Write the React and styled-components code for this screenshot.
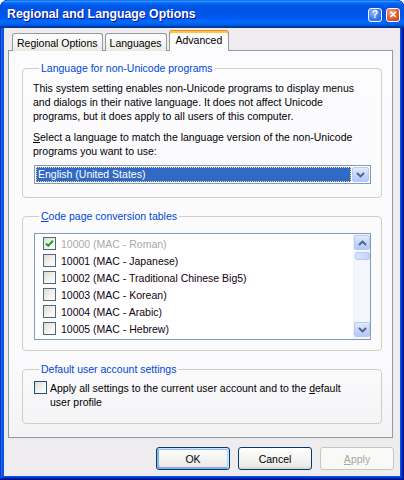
import React from 'react';
import styled, {createGlobalStyle, css} from 'styled-components';

const GlobalStyle = createGlobalStyle`
  html, body {
    margin: 0;
    padding: 0;
    background: #fff;
  }
  body {
    font-family: "Liberation Sans", Arial, sans-serif;
    font-size: 10.5px;
    color: #000;
  }
`;

const Window = styled.div`
  width: 404px;
  height: 480px;
  box-sizing: border-box;
  display: flex;
  flex-direction: column;
  background: #0855dd;
  border-radius: 8px 7px 0 0;
  overflow: hidden;
  box-shadow: inset -1px -1px #00138c, inset 1px 1px #0831d9,
    inset -2px -2px #001ea0, inset 2px 2px #166aee,
    inset -3px -3px #003bda, inset 3px 3px #0855dd;
`;

const TitleBar = styled.div`
  height: 28px;
  flex: none;
  display: flex;
  align-items: center;
  padding: 0 4px 0 7px;
  background: linear-gradient(180deg, #0058ee, #3593ff 4%, #288eff 6%, #127dff 8%,
    #036ffc 10%, #0262ee 14%, #0057e5 20%, #0054e3 24%, #0055eb 56%,
    #005bf5 66%, #026afe 76%, #0062ef 86%, #0052d6 92%, #0040ab 94%, #003092);
  border-radius: 8px 7px 0 0;
`;

const Title = styled.span`
  color: #fff;
  font: bold 12.3px "Liberation Sans", Arial, sans-serif;
  text-shadow: 1px 1px #0f1089;
`;

const Controls = styled.div`
  margin-left: auto;
  display: flex;
  gap: 4px;
  padding-top: 1px;
`;

const ControlButton = styled.div`
  width: 14px;
  height: 14px;
  box-sizing: border-box;
  border: 1px solid #fff;
  border-radius: 3px;
  display: flex;
  align-items: center;
  justify-content: center;
  color: #fff;
  font: bold 10px "Liberation Sans", Arial, sans-serif;
  ${p => p.close ? css`
    background: radial-gradient(circle at 35% 30%, #f4a98e, #e2582f 55%, #c83b12);
  ` : css`
    background: radial-gradient(circle at 35% 30%, #8fb7ff, #3a7cf3 55%, #1f5fd8);
  `}
`;

const Client = styled.div`
  flex: 1;
  margin: 0 4px 4px;
  background: #efecef;
  display: flex;
  flex-direction: column;
  padding: 3px 7px 0 4px;
`;

const TabList = styled.div`
  height: 20px;
  display: flex;
  align-items: flex-end;
  gap: 2px;
  padding-left: 4px;
  margin-bottom: -1px;
  position: relative;
  z-index: 1;
`;

const Tab = styled.div`
  height: 18px;
  box-sizing: border-box;
  padding: 0 4px;
  display: flex;
  align-items: center;
  border: 1px solid #919b9c;
  border-bottom: none;
  border-radius: 3px 3px 0 0;
  background: linear-gradient(180deg, #fff, #f4f4f1 60%, #e9e8e2);
  white-space: nowrap;
  ${p => p.active && css`
    height: 21px;
    padding: 0 6px 3px;
    background: #fcfcfe;
    border-top: 1px solid #e68b2c;
    box-shadow: inset 0 2px #ffc73c;
  `}
`;

const Panel = styled.div`
  flex: 1;
  border: 1px solid #919b9c;
  background: linear-gradient(180deg, #fcfcfe, #fbfbfd 80%, #f3f2f5);
  padding: 11px 10px 13px 13px;
  display: flex;
  flex-direction: column;
  gap: 12px;
`;

const Group = styled.fieldset`
  margin: 0;
  min-width: 0;
  border: 1px solid #d0d0bf;
  border-radius: 4px;
  padding: 0 10px ${p => p.bottom}px;
`;

const Legend = styled.legend`
  padding: 0 2px;
  margin-left: 6px;
  color: #0046d5;
  line-height: 13px;
`;

const Text = styled.p`
  margin: ${p => p.top || 0}px 0 0;
  line-height: 14px;
`;

const Combo = styled.div`
  margin: 7px 0 0 1px;
  height: 19px;
  box-sizing: border-box;
  border: 1px solid #7f9db9;
  background: #fff;
  display: flex;
  padding: 1px;
  gap: 1px;
`;

const ComboValue = styled.div`
  flex: 1;
  background: #316ac5;
  color: #fff;
  outline: 1px dotted #f8d68e;
  outline-offset: -1px;
  padding-left: 2px;
  line-height: 15px;
`;

const ArrowButton = styled.div`
  width: ${p => p.w || 16}px;
  height: ${p => p.h || 15}px;
  box-sizing: border-box;
  flex: none;
  border: 1px solid #b7caf5;
  border-radius: 2px;
  background: linear-gradient(180deg, #e0eaff, #c6d6fb 50%, #b4c8f6);
  display: flex;
  align-items: center;
  justify-content: center;
`;

const ListBox = styled.div`
  margin: 10px 0 0 1px;
  height: 107px;
  box-sizing: border-box;
  border: 1px solid #7f9db9;
  background: #fff;
  display: flex;
`;

const Items = styled.div`
  flex: 1;
  padding: 1px 0 0 8px;
`;

const Item = styled.div`
  height: 17px;
  display: flex;
  align-items: center;
  gap: 5px;
  color: ${p => p.disabled ? '#a9a8ad' : '#100010'};
`;

const Box = styled.div`
  width: 13px;
  height: 13px;
  box-sizing: border-box;
  flex: none;
  border: 1px solid ${p => p.dark ? '#1c5180' : '#55667a'};
  background: linear-gradient(135deg, #dcdcd7, #f4f4f0 60%, #fff);
  display: flex;
  align-items: center;
  justify-content: center;
`;

const ScrollBar = styled.div`
  width: 17px;
  flex: none;
  background: #f3f6fd;
  border-left: 1px solid #eef2fb;
  display: flex;
  flex-direction: column;
  align-items: center;
  padding: 1px 0 2px;
  box-sizing: border-box;
`;

const Thumb = styled.div`
  width: 15px;
  height: 8px;
  margin-top: 2px;
  box-sizing: border-box;
  border: 1px solid #b7caf5;
  border-radius: 2px;
  background: linear-gradient(90deg, #d7e3fd, #c3d4fb);
`;

const Spacer = styled.div`
  flex: 1;
`;

const CheckRow = styled.div`
  display: flex;
  gap: 3px;
  margin: 5px 0 0 1px;
  line-height: 14px;
  align-items: flex-start;
`;

const CheckLabel = styled.span`
  max-width: 298px;
`;

const ButtonRow = styled.div`
  display: flex;
  justify-content: flex-end;
  gap: 8px;
  margin: 9px -1px 6px 0;
`;

const Button = styled.button`
  width: 74px;
  height: 23px;
  box-sizing: border-box;
  font: 10.5px "Liberation Sans", Arial, sans-serif;
  color: #000;
  padding: 0;
  border: 1px solid #003c74;
  border-radius: 3px;
  background: linear-gradient(180deg, #fff, #ecebe6 86%, #d6d0c5);
  ${p => p.primary && css`
    box-shadow: inset -1px 1px #cee7ff, inset 1px 2px #98b8ea,
      inset -2px 2px #bcd4f6, inset 1px -1px #89ade4, inset 2px -2px #89ade4;
  `}
  &:disabled {
    background: #f9f9f8;
    border-color: #c9c7ba;
    color: #aca899;
  }
`;

const Chevron = ({up}) => (
  <svg width="9" height="6" viewBox="0 0 9 6">
    <path d={up ? 'M1 5 L4.5 1.5 L8 5' : 'M1 1 L4.5 4.5 L8 1'} fill="none" stroke="#4d6185" strokeWidth="1.8" />
  </svg>
);

const Check = () => (
  <svg width="9" height="9" viewBox="0 0 9 9">
    <path d="M1 4.5 L3.3 6.8 L8 1.8" fill="none" stroke="#21a121" strokeWidth="2" />
  </svg>
);

const pages = [
  ['10000 (MAC - Roman)', true],
  ['10001 (MAC - Japanese)'],
  ['10002 (MAC - Traditional Chinese Big5)'],
  ['10003 (MAC - Korean)'],
  ['10004 (MAC - Arabic)'],
  ['10005 (MAC - Hebrew)'],
];

export default function App() {
  return (
    <>
      <GlobalStyle />
      <Window>
        <TitleBar>
          <Title>Regional and Language Options</Title>
          <Controls>
            <ControlButton>?</ControlButton>
            <ControlButton close>✕</ControlButton>
          </Controls>
        </TitleBar>
        <Client>
          <TabList>
            <Tab>Regional Options</Tab>
            <Tab>Languages</Tab>
            <Tab active>Advanced</Tab>
          </TabList>
          <Panel>
            <Group bottom={13}>
              <Legend>Language for non-Unicode programs</Legend>
              <Text top={6}>
                This system setting enables non-Unicode programs to display menus
                and dialogs in their native language. It does not affect Unicode
                programs, but it does apply to all users of this computer.
              </Text>
              <Text top={7}>
                <u>S</u>elect a language to match the language version of the non-Unicode
                programs you want to use:
              </Text>
              <Combo>
                <ComboValue>English (United States)</ComboValue>
                <ArrowButton w={17} h={15}><Chevron /></ArrowButton>
              </Combo>
            </Group>
            <Group bottom={10}>
              <Legend><u>C</u>ode page conversion tables</Legend>
              <ListBox>
                <Items>
                  {pages.map(([label, checked]) => (
                    <Item key={label} disabled={checked}>
                      <Box>{checked && <Check />}</Box>
                      {label}
                    </Item>
                  ))}
                </Items>
                <ScrollBar>
                  <ArrowButton><Chevron up /></ArrowButton>
                  <Thumb />
                  <Spacer />
                  <ArrowButton><Chevron /></ArrowButton>
                </ScrollBar>
              </ListBox>
            </Group>
            <Group bottom={14}>
              <Legend>Default user account settings</Legend>
              <CheckRow>
                <Box dark />
                <CheckLabel>
                  Apply all settings to the current user account and to the <u>d</u>efault
                  user profile
                </CheckLabel>
              </CheckRow>
            </Group>
          </Panel>
          <ButtonRow>
            <Button primary>OK</Button>
            <Button>Cancel</Button>
            <Button disabled><u>A</u>pply</Button>
          </ButtonRow>
        </Client>
      </Window>
    </>
  );
}
